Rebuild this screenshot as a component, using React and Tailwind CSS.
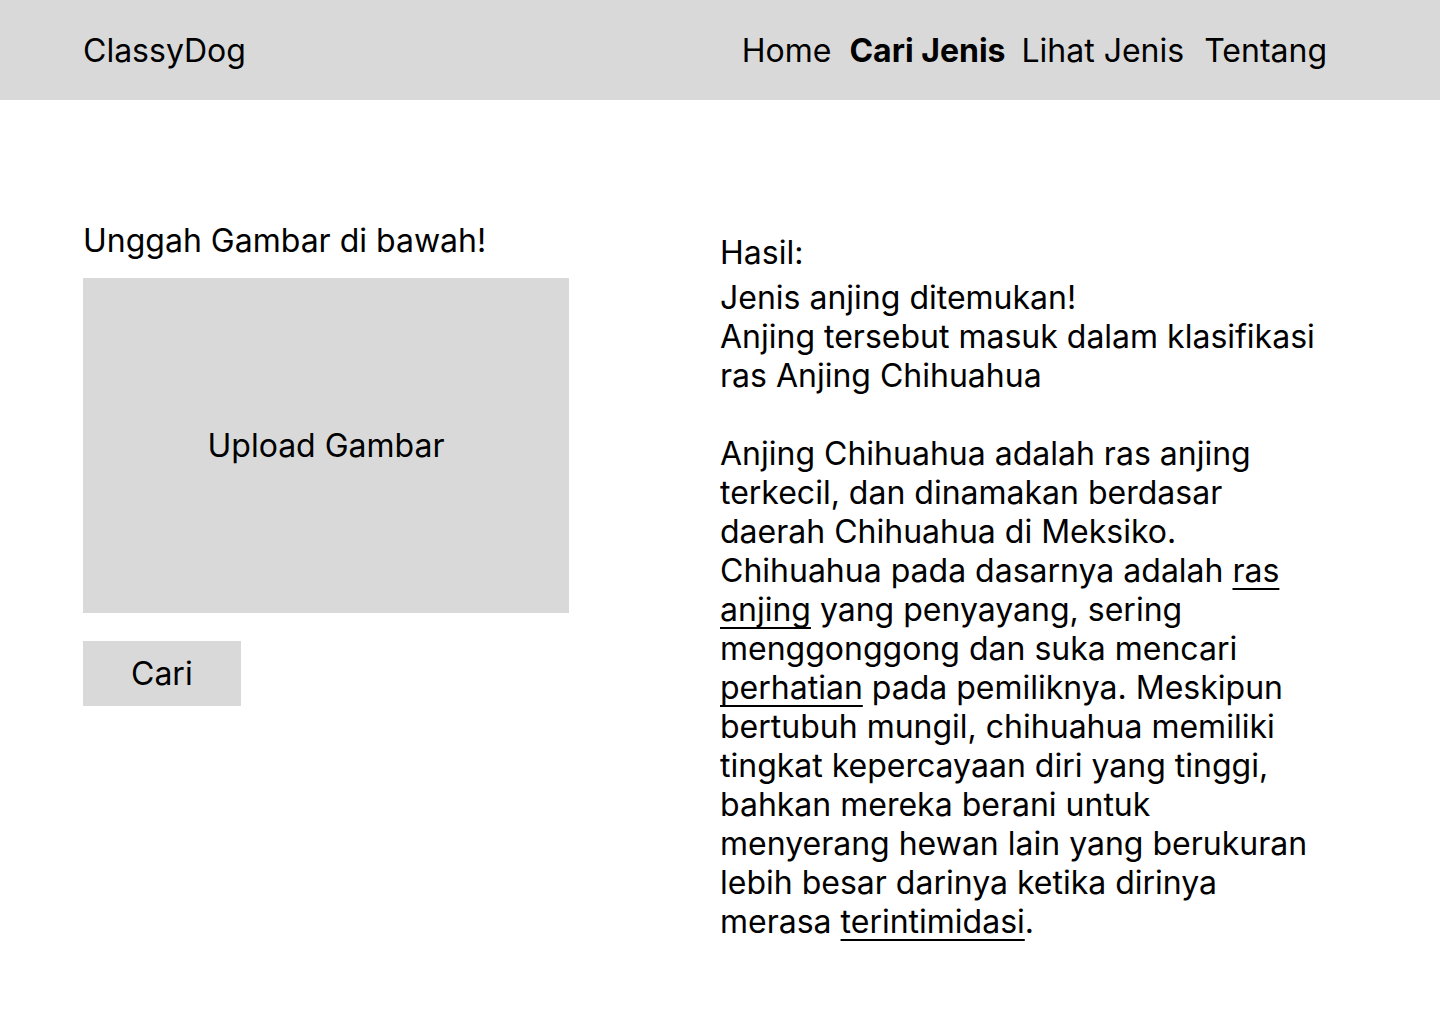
const navItems = [
  { label: "Home", className: "ml-0" },
  { label: "Cari Jenis", className: "ml-[18px] font-bold", current: true },
  { label: "Lihat Jenis", className: "ml-4" },
  { label: "Tentang", className: "ml-5" },
];

function Term({ children }) {
  return (
    <a href="#istilah" className="underline decoration-2 underline-offset-[6px] [text-decoration-skip-ink:none]">
      {children}
    </a>
  );
}

export default function App() {
  return (
    <div className="min-h-screen bg-white font-['Inter',sans-serif] text-[32px] leading-[39px] text-black antialiased">
      <header className="flex items-center justify-between bg-[#d9d9d9] pt-[31px] pb-[30px] pl-[83px] pr-[113px]">
        <a href="#beranda">ClassyDog</a>
        <nav className="flex whitespace-nowrap">
          {navItems.map((item) => (
            <a
              key={item.label}
              href="#menu"
              aria-current={item.current ? "page" : undefined}
              className={item.className}
            >
              {item.label}
            </a>
          ))}
        </nav>
      </header>

      <main className="grid grid-cols-2 pb-16">
        <section className="flex flex-col items-start pt-[121px] pl-[83px] pr-[151px]">
          <h1>Unggah Gambar di bawah!</h1>
          <button type="button" className="mt-[18px] h-[335px] w-full bg-[#d9d9d9]">
            Upload Gambar
          </button>
          <button type="button" className="mt-7 bg-[#d9d9d9] px-12 py-[13px]">
            Cari
          </button>
        </section>

        <section className="pt-[133px] pr-[120px]">
          <h2>Hasil:</h2>
          <div className="mt-1.5">
            <p>Jenis anjing ditemukan!</p>
            <p>Anjing tersebut masuk dalam klasifikasi ras Anjing Chihuahua</p>
            <p className="mt-[39px]">
              Anjing Chihuahua adalah ras anjing terkecil, dan dinamakan berdasar daerah Chihuahua di
              Meksiko. Chihuahua pada dasarnya adalah <Term>ras anjing</Term> yang penyayang, sering
              menggonggong dan suka mencari <Term>perhatian</Term> pada pemiliknya. Meskipun bertubuh
              mungil, chihuahua memiliki tingkat kepercayaan diri yang tinggi, bahkan mereka berani
              untuk menyerang hewan lain yang berukuran lebih besar darinya ketika dirinya merasa{" "}
              <Term>terintimidasi</Term>.
            </p>
          </div>
        </section>
      </main>
    </div>
  );
}
